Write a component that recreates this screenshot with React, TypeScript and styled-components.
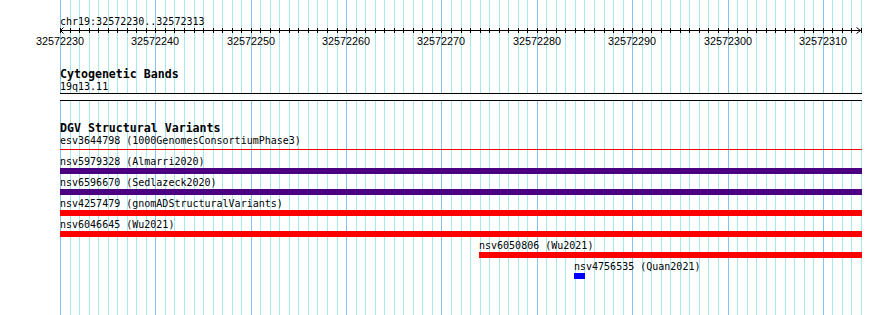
import React from "react";
import styled, { createGlobalStyle } from "styled-components";

const VIEW_START = 32572230;
const VIEW_BP = 84;
const PANEL_LEFT = 60;
const PANEL_WIDTH = 802;
const SCALE = (PANEL_WIDTH - 1) / VIEW_BP;

const pos = (bp: number) => Math.round(bp * SCALE);

type Feature = {
  id: string;
  source: string;
  start: number;
  end: number;
  color: string;
  glyph?: "box" | "line";
};

const variants: Feature[] = [
  { id: "esv3644798", source: "1000GenomesConsortiumPhase3", start: 0, end: 84, color: "#ff0000", glyph: "line" },
  { id: "nsv5979328", source: "Almarri2020", start: 0, end: 84, color: "#4b0082" },
  { id: "nsv6596670", source: "Sedlazeck2020", start: 0, end: 84, color: "#4b0082" },
  { id: "nsv4257479", source: "gnomADStructuralVariants", start: 0, end: 84, color: "#ff0000" },
  { id: "nsv6046645", source: "Wu2021", start: 0, end: 84, color: "#ff0000" },
  { id: "nsv6050806", source: "Wu2021", start: 44, end: 84, color: "#ff0000" },
  { id: "nsv4756535", source: "Quan2021", start: 54, end: 55, color: "#0000ff" },
];

const GlobalStyle = createGlobalStyle`
  html, body {
    margin: 0;
    padding: 0;
    background: #fff;
  }
  body {
    font-family: "DejaVu Sans Mono", monospace;
    color: #000;
  }
`;

const Page = styled.div`
  position: relative;
  width: 890px;
  height: 315px;
  overflow: hidden;
  background: #fff;
`;

const Grid = styled.svg`
  position: absolute;
  left: 0;
  top: 0;
`;

const Panel = styled.div`
  position: relative;
  margin-left: ${PANEL_LEFT}px;
  width: ${PANEL_WIDTH}px;
  padding-top: 16px;
`;

const SegmentLabel = styled.div`
  font: 10px/12px "DejaVu Sans Mono", monospace;
  white-space: nowrap;
`;

const RulerSvg = styled.svg`
  display: block;
  overflow: visible;
`;

const RulerText = styled.text`
  font-family: "Liberation Sans", Arial, sans-serif;
  font-size: 10.8px;
  fill: #000;
`;

const Track = styled.section<{ $gap: number }>`
  margin-top: ${({ $gap }) => $gap}px;
`;

const TrackTitle = styled.div`
  font: bold 11.6px/13px "DejaVu Sans Mono", monospace;
  white-space: nowrap;
`;

const FeatureRow = styled.div`
  height: 21px;
`;

const FeatureLabel = styled.div`
  height: 12px;
  font: 10px/12px "DejaVu Sans Mono", monospace;
  white-space: nowrap;
`;

const FeatureBar = styled.div<{ $color: string; $glyph: "box" | "line" }>`
  box-sizing: border-box;
  height: 6px;
  background: ${({ $color }) => $color};
  background-clip: padding-box;
  border-top: ${({ $glyph }) => ($glyph === "line" ? "2px" : "0")} solid transparent;
  border-bottom: ${({ $glyph }) => ($glyph === "line" ? "3px" : "0")} solid transparent;
`;

const BandBox = styled.div`
  height: 6px;
  border-top: 1px solid #000;
  border-bottom: 1px solid #000;
  background: #fff;
`;

function GridLines() {
  const lines = [];
  for (let i = 0; i <= VIEW_BP; i++) {
    const x = PANEL_LEFT + pos(i) + 0.5;
    const major = (VIEW_START + i) % 10 === 0;
    lines.push(
      <line
        key={i}
        x1={x}
        x2={x}
        y1={0}
        y2={315}
        stroke={major ? "#84c4f0" : "#a8e8f0"}
        strokeWidth={1}
      />
    );
  }
  return (
    <Grid width={890} height={315} shapeRendering="crispEdges">
      {lines}
    </Grid>
  );
}

function Ruler() {
  const ticks = [];
  const labels = [];
  for (let i = 0; i <= VIEW_BP; i++) {
    const x = pos(i) + 0.5;
    ticks.push(<line key={i} x1={x} x2={x} y1={0} y2={5} stroke="#000" />);
    if ((VIEW_START + i) % 10 === 0) {
      labels.push(
        <RulerText key={i} x={pos(i)} y={16.5} textAnchor="middle">
          {VIEW_START + i}
        </RulerText>
      );
    }
  }
  return (
    <RulerSvg width={PANEL_WIDTH} height={20}>
      <g shapeRendering="crispEdges">
        <line x1={0} x2={PANEL_WIDTH - 1} y1={2.5} y2={2.5} stroke="#000" />
        {ticks}
      </g>
      <polyline points="3.5,-0.5 0.5,2.5 3.5,5.5" fill="none" stroke="#000" />
      <polyline points="796.5,-0.5 800.5,2.5 796.5,5.5" fill="none" stroke="#000" />
      {labels}
    </RulerSvg>
  );
}

export default function App() {
  return (
    <Page>
      <GlobalStyle />
      <GridLines />
      <Panel>
        <SegmentLabel>chr19:32572230..32572313</SegmentLabel>
        <Ruler />

        <Track $gap={20}>
          <TrackTitle>Cytogenetic Bands</TrackTitle>
          <FeatureLabel>19q13.11</FeatureLabel>
          <BandBox />
        </Track>

        <Track $gap={21}>
          <TrackTitle>DGV Structural Variants</TrackTitle>
          {variants.map((f) => {
            const left = Math.floor(f.start * SCALE);
            const width = pos(f.end) - left + 1;
            return (
              <FeatureRow key={f.id}>
                <FeatureLabel style={{ marginLeft: left }}>
                  {f.id} ({f.source})
                </FeatureLabel>
                <FeatureBar
                  $color={f.color}
                  $glyph={f.glyph ?? "box"}
                  style={{ marginLeft: left, width }}
                />
              </FeatureRow>
            );
          })}
        </Track>
      </Panel>
    </Page>
  );
}
